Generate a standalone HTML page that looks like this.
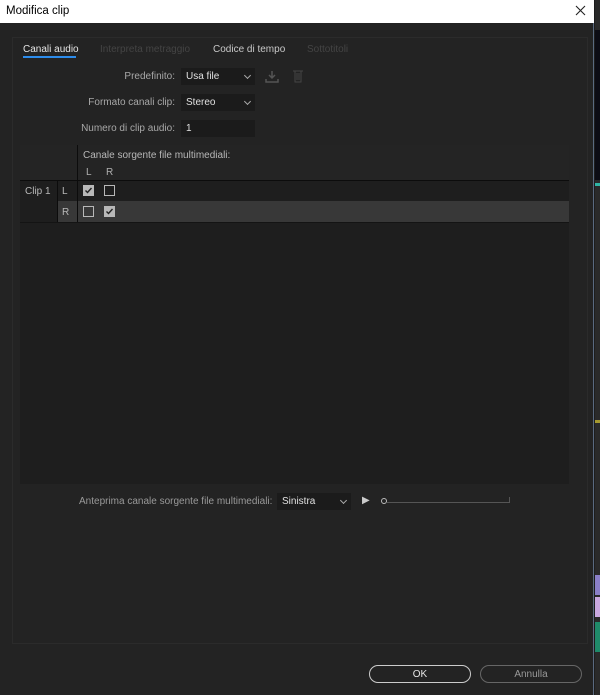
<!DOCTYPE html>
<html><head><meta charset="utf-8"><style>
*{margin:0;padding:0;box-sizing:border-box}
body{width:600px;height:695px;background:#1d1d1d;font-family:"Liberation Sans",sans-serif;font-size:10px;color:#d0d0d0;position:relative;overflow:hidden}
.a{position:absolute}
.title{left:0;top:0;width:594px;height:23px;background:#fff;color:#000;font-size:11.5px;padding:5px 0 0 6px}
.dlg{left:0;top:23px;width:594px;height:672px;background:#232323;border-right:1px solid #5a6a80}
.lbl{color:#a8a8a8;text-align:right;width:160px;left:15px}
.sel{background:#1b1b1b;height:17px;color:#e0e0e0;padding:3px 5px}
.cb{width:11px;height:11px;border:1.5px solid #b8b8b8}
.cb.on{background:#b8b8b8}
.chev{position:absolute;right:5px;top:5px;width:5px;height:5px;border-right:1.3px solid #aaa;border-bottom:1.3px solid #aaa;transform:rotate(45deg)}
</style></head><body>
<div class="a title">Modifica clip</div>
<svg class="a" style="left:575px;top:5px" width="11" height="11"><path d="M1 1L10 10M10 1L1 10" stroke="#222" stroke-width="1.1"/></svg>
<div class="a dlg"></div>
<div class="a" style="left:12px;top:37px;width:576px;height:607px;border:1px solid #2b2b2b"></div>
<div class="a" style="left:23px;top:44px;color:#e6e6e6">Canali audio</div>
<div class="a" style="left:23px;top:56px;width:53px;height:2px;background:#2d8ceb"></div>
<div class="a" style="left:100px;top:44px;color:#444">Interpreta metraggio</div>
<div class="a" style="left:213px;top:44px;color:#c8c8c8">Codice di tempo</div>
<div class="a" style="left:307px;top:44px;color:#444">Sottotitoli</div>
<div class="a lbl" style="top:71px">Predefinito:</div>
<div class="a sel" style="left:181px;top:68px;width:74px">Usa file<span class="chev"></span></div>
<svg class="a" style="left:265px;top:70px" width="14" height="13"><path d="M7 1V8M4 5L7 8L10 5M1 9V12H13V9" stroke="#555" stroke-width="1.5" fill="none"/></svg>
<svg class="a" style="left:292px;top:69px" width="12" height="14"><path d="M1 2H11M3 2V13H9V2M5 4V11M7 4V11" stroke="#444" stroke-width="1" fill="none"/></svg>
<div class="a lbl" style="top:97px">Formato canali clip:</div>
<div class="a sel" style="left:181px;top:94px;width:74px">Stereo<span class="chev"></span></div>
<div class="a lbl" style="top:123px">Numero di clip audio:</div>
<div class="a sel" style="left:181px;top:120px;width:74px">1</div>
<div class="a" style="left:20px;top:145px;width:549px;height:339px;background:#1e1e1e"></div>
<div class="a" style="left:20px;top:145px;width:549px;height:35px;background:#242424"></div>
<div class="a" style="left:20px;top:180px;width:549px;height:1px;background:#0c0c0c"></div>
<div class="a" style="left:57px;top:201px;width:512px;height:21px;background:#383838"></div>
<div class="a" style="left:20px;top:222px;width:549px;height:1px;background:#141414"></div>
<div class="a" style="left:77px;top:145px;width:1px;height:77px;background:#0c0c0c"></div>
<div class="a" style="left:57px;top:180px;width:1px;height:42px;background:#0c0c0c"></div>
<div class="a" style="left:83px;top:150px;color:#b8b8b8">Canale sorgente file multimediali:</div>
<div class="a" style="left:86px;top:167px;color:#b0b0b0">L</div>
<div class="a" style="left:106px;top:167px;color:#b0b0b0">R</div>
<div class="a" style="left:25px;top:186px;color:#b8b8b8">Clip 1</div>
<div class="a" style="left:62px;top:186px;color:#b8b8b8">L</div>
<div class="a" style="left:62px;top:207px;color:#b8b8b8">R</div>
<div class="a cb on" style="left:83px;top:185px"></div>
<svg class="a" style="left:83px;top:185px" width="11" height="11"><path d="M2.5 5.5L4.5 7.5L8.5 3" stroke="#222" stroke-width="1.4" fill="none"/></svg>
<div class="a cb" style="left:104px;top:185px"></div>
<div class="a cb" style="left:83px;top:206px"></div>
<div class="a cb on" style="left:104px;top:206px"></div>
<svg class="a" style="left:104px;top:206px" width="11" height="11"><path d="M2.5 5.5L4.5 7.5L8.5 3" stroke="#222" stroke-width="1.4" fill="none"/></svg>
<div class="a" style="left:79px;top:496px;color:#999">Anteprima canale sorgente file multimediali:</div>
<div class="a sel" style="left:277px;top:493px;width:74px">Sinistra<span class="chev"></span></div>
<div class="a" style="left:362px;top:495px;color:#ccc;font-size:10px">▶</div>
<div class="a" style="left:381px;top:498px;width:6px;height:6px;border:1px solid #bbb;border-radius:50%"></div>
<div class="a" style="left:387px;top:502px;width:122px;height:1px;background:#555"></div>
<div class="a" style="left:509px;top:497px;width:1px;height:6px;background:#555"></div>
<div class="a" style="left:369px;top:665px;width:102px;height:18px;border:1.5px solid #ccc;border-radius:9px;text-align:center;padding-top:3px;color:#e6e6e6">OK</div>
<div class="a" style="left:480px;top:665px;width:102px;height:18px;border:1.5px solid #666;border-radius:9px;text-align:center;padding-top:3px;color:#999">Annulla</div>
<div class="a" style="left:595px;top:0;width:5px;height:695px;background:#2a2a2a"></div>
<div class="a" style="left:595px;top:30px;width:5px;height:150px;background:#0c0c14"></div>
<div class="a" style="left:595px;top:183px;width:5px;height:3px;background:#2fb5a5"></div>
<div class="a" style="left:595px;top:420px;width:5px;height:3px;background:#a69a30"></div>
<div class="a" style="left:595px;top:575px;width:5px;height:20px;background:#8a7fc8"></div>
<div class="a" style="left:595px;top:597px;width:5px;height:20px;background:#c9a8e0"></div>
<div class="a" style="left:595px;top:622px;width:5px;height:30px;background:#1f8a6a"></div>
</body></html>
